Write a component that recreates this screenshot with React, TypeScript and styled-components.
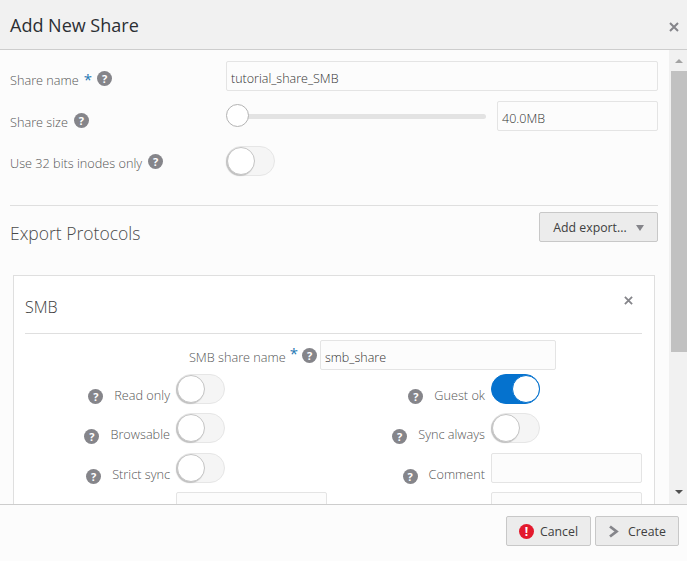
import React from "react";
import styled, { createGlobalStyle } from "styled-components";

const Global = createGlobalStyle`
  html, body { margin: 0; padding: 0; height: 100%; background: #fcfcfc; }
  body { font-family: "Open Sans", "Noto Sans", "Liberation Sans", sans-serif; overflow: hidden; }
  #root { height: 100%; }
  * { box-sizing: border-box; }
`;

const Dialog = styled.div`
  width: 687px;
  height: 561px;
  display: flex;
  flex-direction: column;
`;
const Header = styled.header`
  height: 50px;
  flex: none;
  background: #f1f1f1;
  border-bottom: 1px solid #cdcdcd;
  display: flex;
  align-items: center;
  justify-content: space-between;
  padding: 0 8px 0 10px;
`;
const Title = styled.h1`
  margin: 1px 0 0;
  font-size: 18px;
  font-weight: 400;
  color: #2b2e33;
`;
const CloseIcon = styled.svg<{ $m?: string }>`
  display: block;
  margin: ${(p) => p.$m || "4px 0 0"};
  color: #85858a;
`;
const Middle = styled.div`
  flex: 1;
  min-height: 0;
  display: flex;
`;
const Content = styled.main`
  flex: 1;
  min-width: 0;
  overflow: hidden;
  padding: 11px 11px 0 10px;
`;
const ScrollTrack = styled.div`
  width: 18px;
  flex: none;
  background: #f1f1f1;
  padding-left: 2px;
  display: flex;
  flex-direction: column;
  align-items: stretch;
`;
const ScrollArrow = styled.div<{ $down?: boolean }>`
  height: 21px;
  flex: none;
  display: flex;
  align-items: center;
  justify-content: center;
  margin-top: ${(p) => (p.$down ? "auto" : "0")};
  padding-bottom: ${(p) => (p.$down ? "4px" : "0")};
  &::before {
    content: "";
    width: 0;
    height: 0;
    border-left: 4px solid transparent;
    border-right: 4px solid transparent;
    ${(p) => (p.$down ? "border-top: 4px solid #505050;" : "border-bottom: 4px solid #a3a3a3;")}
  }
`;
const ScrollThumb = styled.div`
  height: 281px;
  flex: none;
  background: #c1c1c1;
`;
const FormRow = styled.div<{ $top: number }>`
  display: grid;
  grid-template-columns: 216px 1fr;
  margin-top: ${(p) => p.$top}px;
`;
const LabelCell = styled.div<{ $offset: number }>`
  display: flex;
  align-items: center;
  gap: 6px;
  padding-top: ${(p) => p.$offset}px;
  height: 20px;
  box-sizing: content-box;
`;
const Label = styled.span`
  font-size: 12.7px;
  line-height: 20px;
  font-weight: 300;
  color: #555;
  white-space: nowrap;
`;
const Star = styled.span`
  font-size: 15px;
  line-height: 14px;
  height: 14px;
  color: #1f78b4;
  margin: 2px -1px 0;
  align-self: flex-start;
`;
const Help = styled.span<{ $shift?: number }>`
  width: 15px;
  height: 15px;
  flex: none;
  border-radius: 50%;
  background: #85858a;
  color: #fff;
  font-size: 11px;
  font-weight: 700;
  line-height: 15px;
  text-align: center;
  position: relative;
  top: ${(p) => p.$shift || 0}px;
`;
const Input = styled.div<{ $w?: number }>`
  height: 30px;
  width: ${(p) => (p.$w ? `${p.$w}px` : "100%")};
  flex: none;
  background: #fcfcfc;
  border: 1px solid #e4e4e4;
  border-radius: 2px;
  padding: 3px 4px 0;
  font-size: 12.5px;
  font-weight: 300;
  line-height: 27px;
  color: #333;
`;
const SliderRow = styled.div`
  display: flex;
  gap: 11px;
`;
const Slider = styled.div`
  flex: 1;
  position: relative;
  height: 30px;
  &::before {
    content: "";
    position: absolute;
    left: 6px;
    right: 0;
    top: 13px;
    height: 5px;
    border-radius: 3px;
    background: #e3e3e3;
  }
`;
const SliderThumb = styled.div`
  position: absolute;
  left: 0;
  top: 3px;
  width: 23px;
  height: 23px;
  border-radius: 50%;
  background: #fff;
  border: 1px solid #b3b3b3;
`;
const Toggle = styled.div<{ $on?: boolean }>`
  width: 49px;
  height: 30px;
  flex: none;
  position: relative;
  border-radius: 15px;
  background: ${(p) => (p.$on ? "#0572ce" : "#f5f5f5")};
  border: 1px solid ${(p) => (p.$on ? "#0572ce" : "#e6e6e6")};
`;
const Knob = styled.div<{ $on?: boolean }>`
  position: absolute;
  top: 0;
  left: ${(p) => (p.$on ? "20px" : "0")};
  width: 28px;
  height: 28px;
  border-radius: 50%;
  background: #fff;
  border: 1px solid ${(p) => (p.$on ? "#0572ce" : "#c4c4c4")};
  box-shadow: ${(p) => (p.$on ? "none" : "-1px 1px 1px #c0c0c0")};
`;
const Divider = styled.hr`
  margin: 29px 0 0;
  border: 0;
  border-top: 1px solid #dfdfdf;
`;
const ExportHead = styled.div`
  display: flex;
  justify-content: space-between;
  align-items: flex-start;
  margin-top: 6px;
`;
const SectionTitle = styled.h2`
  margin: 8px 0 0;
  font-size: 17.5px;
  line-height: 26px;
  font-weight: 300;
  color: #4a4a4a;
`;
const ActionButton = styled.button<{ $w: number }>`
  width: ${(p) => p.$w}px;
  height: 30px;
  display: flex;
  align-items: center;
  justify-content: center;
  gap: 6px;
  padding: 1px 0 0;
  background: #ececec;
  border: 1px solid #c8c8c8;
  border-radius: 2px;
  font: inherit;
  font-size: 12.3px;
  line-height: 26px;
  color: #404040;
`;
const Caret = styled.span`
  width: 0;
  height: 0;
  margin-left: 3px;
  border-left: 4.5px solid transparent;
  border-right: 4.5px solid transparent;
  border-top: 6px solid #85858a;
`;
const Card = styled.section`
  margin: 29px 3px 0;
  height: 300px;
  background: #fff;
  border: 1px solid #dfdfdf;
  padding: 0 12px 0 11px;
`;
const CardHead = styled.div`
  height: 58px;
  display: flex;
  justify-content: space-between;
  align-items: flex-start;
  border-bottom: 1px solid #dfdfdf;
  padding-right: 9px;
`;
const CardTitle = styled.h3`
  margin: 19px 0 0;
  font-size: 16px;
  line-height: 24px;
  font-weight: 300;
  color: #3a3a3a;
`;
const NameRow = styled.div`
  display: flex;
  margin-top: 6px;
  height: 30px;
`;
const NameLabel = styled.div`
  width: 295px;
  display: flex;
  align-items: center;
  justify-content: flex-end;
  gap: 5px;
  padding-top: 4px;
  padding-right: 3px;
`;
const Fields = styled.div`
  display: grid;
  grid-template-columns: 302px 302px;
  column-gap: 13px;
  margin-top: 4px;
`;
const Field = styled.div<{ $mt: number }>`
  display: flex;
  justify-content: flex-end;
  margin-top: ${(p) => p.$mt}px;
  gap: 6px;
`;
const FieldLabel = styled.div<{ $drop: number }>`
  display: flex;
  align-items: center;
  gap: 11px;
  height: 20px;
  margin-top: ${(p) => p.$drop}px;
`;
const ControlSlot = styled.div`
  width: 151px;
  flex: none;
  display: flex;
`;
const Footer = styled.footer`
  height: 57px;
  flex: none;
  border-top: 1px solid #cdcdcd;
  background: #fcfcfc;
  display: flex;
  justify-content: flex-end;
  gap: 4px;
  padding: 11px 8px 0 0;
`;
const FootIcon = styled.span`
  width: 15px;
  height: 15px;
  flex: none;
  border-radius: 50%;
  background: #e3192d;
  color: #fff;
  font-size: 12px;
  font-weight: 700;
  line-height: 15px;
  text-align: center;
`;
const Chevron = styled.svg`
  display: block;
  margin-right: 3px;
`;

const X = ({ size, m }: { size: number; m?: string }) => (
  <CloseIcon $m={m} width={size} height={size} viewBox="0 0 10 10" fill="none" stroke="currentColor" strokeWidth="2">
    <path d="M1 1l8 8M9 1L1 9" />
  </CloseIcon>
);

const rows = [
  { label: "Read only", drop: 11, mt: 0, on: false, input: false, shift: 1 },
  { label: "Guest ok", drop: 11, mt: 0, on: true, input: false, shift: 1 },
  { label: "Browsable", drop: 11, mt: 8, on: false, input: false, shift: 2 },
  { label: "Sync always", drop: 11, mt: 8, on: false, input: false, shift: 2 },
  { label: "Strict sync", drop: 11, mt: 9, on: false, input: false, shift: 2 },
  { label: "Comment", drop: 11, mt: 9, on: false, input: true, shift: 2 },
];

export default function App() {
  return (
    <Dialog>
      <Global />
      <Header>
        <Title>Add New Share</Title>
        <X size={10} />
      </Header>
      <Middle>
        <Content>
          <FormRow $top={0}>
            <LabelCell $offset={9}>
              <Label>Share name</Label>
              <Star>*</Star>
              <Help $shift={-2}>?</Help>
            </LabelCell>
            <Input>tutorial_share_SMB</Input>
          </FormRow>
          <FormRow $top={10}>
            <LabelCell $offset={11}>
              <Label>Share size</Label>
              <Help $shift={-2}>?</Help>
            </LabelCell>
            <SliderRow>
              <Slider>
                <SliderThumb />
              </Slider>
              <Input $w={161}>40.0MB</Input>
            </SliderRow>
          </FormRow>
          <FormRow $top={14}>
            <LabelCell $offset={7}>
              <Label>Use 32 bits inodes only</Label>
              <Help $shift={-2}>?</Help>
            </LabelCell>
            <Toggle>
              <Knob />
            </Toggle>
          </FormRow>
          <Divider />
          <ExportHead>
            <SectionTitle>Export Protocols</SectionTitle>
            <ActionButton $w={119}>
              Add export...
              <Caret />
            </ActionButton>
          </ExportHead>
          <Card>
            <CardHead>
              <CardTitle>SMB</CardTitle>
              <X size={9} m="20px 0 0" />
            </CardHead>
            <NameRow>
              <NameLabel>
                <Label>SMB share name</Label>
                <Star>*</Star>
                <Help $shift={-2}>?</Help>
              </NameLabel>
              <Input $w={236}>smb_share</Input>
            </NameRow>
            <Fields>
              {rows.map((f) => (
                <Field key={f.label} $mt={f.mt}>
                  <FieldLabel $drop={f.drop}>
                    <Help $shift={f.shift}>?</Help>
                    <Label>{f.label}</Label>
                  </FieldLabel>
                  <ControlSlot>
                    {f.input ? (
                      <Input />
                    ) : (
                      <Toggle $on={f.on}>
                        <Knob $on={f.on} />
                      </Toggle>
                    )}
                  </ControlSlot>
                </Field>
              ))}
              <Field $mt={8}>
                <ControlSlot>
                  <Input />
                </ControlSlot>
              </Field>
              <Field $mt={8}>
                <ControlSlot>
                  <Input />
                </ControlSlot>
              </Field>
            </Fields>
          </Card>
        </Content>
        <ScrollTrack>
          <ScrollArrow />
          <ScrollThumb />
          <ScrollArrow $down />
        </ScrollTrack>
      </Middle>
      <Footer>
        <ActionButton $w={85}>
          <FootIcon>!</FootIcon>
          Cancel
        </ActionButton>
        <ActionButton $w={84}>
          <Chevron width="11" height="13" viewBox="0 0 11 13" fill="none" stroke="#85858a" strokeWidth="2.8">
            <path d="M2 1.5l6.5 5-6.5 5" />
          </Chevron>
          Create
        </ActionButton>
      </Footer>
    </Dialog>
  );
}
